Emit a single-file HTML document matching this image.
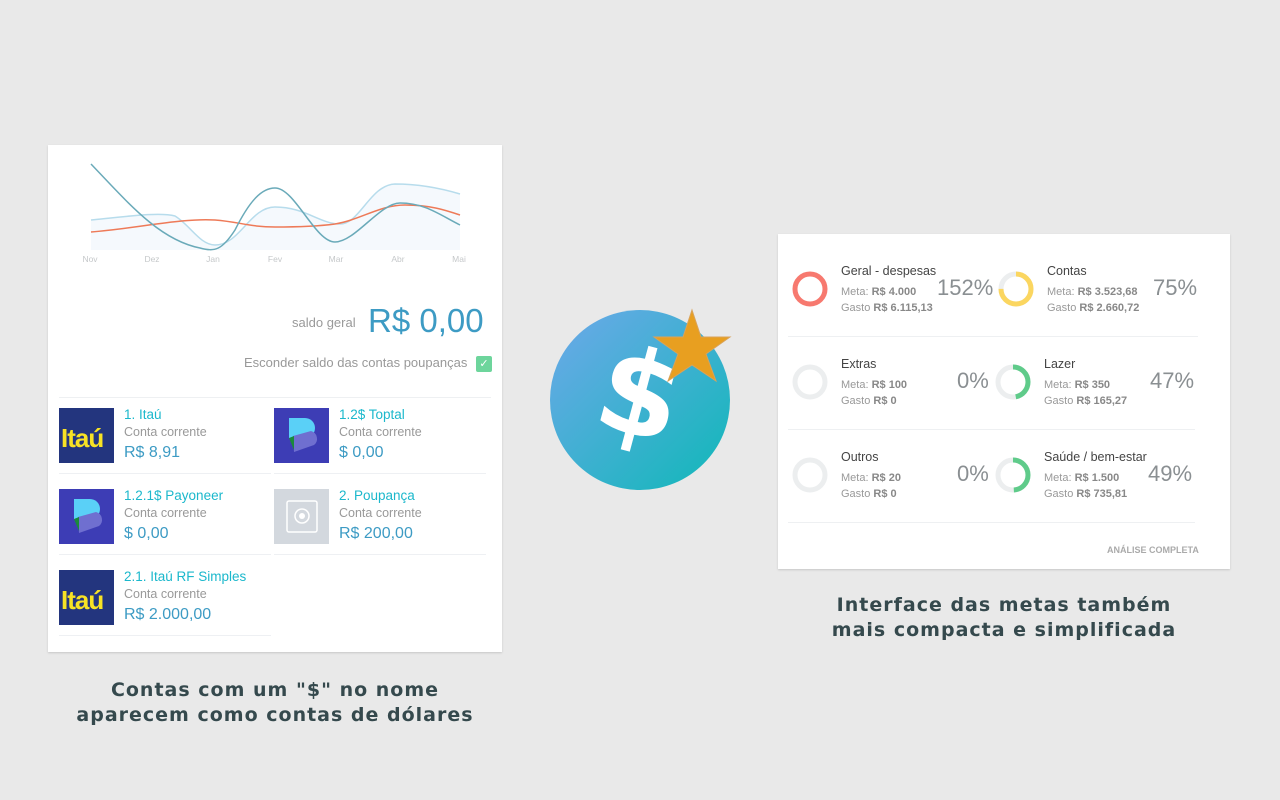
<!DOCTYPE html>
<html><head><meta charset="utf-8"><style>
*{margin:0;padding:0;box-sizing:border-box}
body{width:1280px;height:800px;background:#e9e9e9;position:relative;overflow:hidden;font-family:"Liberation Sans",sans-serif}
.card{position:absolute;background:#fff;box-shadow:0 1px 2px rgba(0,0,0,.15)}
.abs{position:absolute;white-space:nowrap}
.cap{position:absolute;font-family:"DejaVu Sans",sans-serif;font-weight:bold;font-size:19px;letter-spacing:1px;color:#35494d;text-align:center;line-height:25px}
.acc .logo{position:absolute;width:55px;height:55px}
.acc .n{position:absolute;left:65px;top:-1px;font-size:13.5px;color:#1bb8cc}
.acc .t{position:absolute;left:65px;top:17px;font-size:12.5px;color:#999}
.acc .v{position:absolute;left:65px;top:36px;font-size:16px;color:#3d9bc4}
.acc .ln{position:absolute;left:0;top:65px;width:212px;height:1px;background:#eef0f3}
.itau{background:#23357e;color:#f7e225;font-weight:bold;font-size:26px;line-height:60px;text-align:left;padding-left:2px;letter-spacing:-1px}
.g .nm{position:absolute;font-size:12.5px;color:#444}
.g .m{position:absolute;font-size:11px;color:#999;line-height:16px}
.g .m b{color:#888}
.g .p{position:absolute;font-size:22px;color:#8a8f92}
.hl{position:absolute;height:1px;background:#eef0f2}
</style></head><body>

<div class="card" style="left:48px;top:145px;width:454px;height:507px"></div>
<svg class="abs" style="left:0;top:0" width="520" height="280">
<path d="M91,220 C130,216 160,212 175,216 C190,225 200,245 215,245 C240,245 250,207 275,207 C305,207 320,224 340,224 C360,224 370,185 395,184 C420,184 440,188 460,194 L460,250 L91,250Z" fill="#f5f9fd"/>
<path d="M91,220 C130,216 160,212 175,216 C190,225 200,245 215,245 C240,245 250,207 275,207 C305,207 320,224 340,224 C360,224 370,185 395,184 C420,184 440,188 460,194" fill="none" stroke="#b7dcec" stroke-width="1.5"/>
<path d="M91,232 C140,228 180,218 215,220 C240,222 250,227 275,227 C300,227 320,226 335,224 C360,220 380,205 405,205 C430,205 445,210 460,215" fill="none" stroke="#ee7a58" stroke-width="1.5"/>
<path d="M91,164 C130,205 160,240 200,248 C215,252 222,250 235,230 C250,200 262,188 275,188 C295,188 315,242 335,242 C355,242 380,203 400,203 C425,203 440,215 460,225" fill="none" stroke="#6aaab9" stroke-width="1.5"/>
<g font-family="Liberation Sans" font-size="8.5" fill="#c5c8ca" text-anchor="middle">
<text x="90" y="262">Nov</text><text x="152" y="262">Dez</text><text x="213" y="262">Jan</text><text x="275" y="262">Fev</text><text x="336" y="262">Mar</text><text x="398" y="262">Abr</text><text x="459" y="262">Mai</text></g>
</svg>
<div class="abs" style="left:292px;top:315px;font-size:13px;color:#999">saldo geral</div>
<div class="abs" style="left:368px;top:302px;font-size:33px;color:#3d9bc4">R$ 0,00</div>
<div class="abs" style="left:244px;top:355px;font-size:13px;color:#999">Esconder saldo das contas poupanças</div>
<div class="abs" style="left:476px;top:356px;width:16px;height:16px;background:#6dd59c;border-radius:2px;color:#fff;font-size:11px;text-align:center;line-height:16px">✓</div>
<div class="hl" style="left:59px;top:397px;width:432px"></div>

<div class="abs acc" style="left:59px;top:408px"><div class="logo itau">Itaú</div><div class="n">1. Itaú</div><div class="t">Conta corrente</div><div class="v">R$ 8,91</div><div class="ln"></div></div>
<div class="abs acc" style="left:274px;top:408px"><div class="logo" style="background:#3d3db5"><svg width="55" height="55"><path d="M15,10 h16 a10,10 0 0 1 0,20 h-16z" fill="#5ad0f7"/><path d="M19,28 l18,-5 a8,8 0 0 1 3,14 l-20,7z" fill="#6f6fd0"/><path d="M15,30 l5,-2 v14z" fill="#1a8a3c"/></svg></div><div class="n">1.2$ Toptal</div><div class="t">Conta corrente</div><div class="v">$ 0,00</div><div class="ln"></div></div>
<div class="abs acc" style="left:59px;top:489px"><div class="logo" style="background:#3d3db5"><svg width="55" height="55"><path d="M15,10 h16 a10,10 0 0 1 0,20 h-16z" fill="#5ad0f7"/><path d="M19,28 l18,-5 a8,8 0 0 1 3,14 l-20,7z" fill="#6f6fd0"/><path d="M15,30 l5,-2 v14z" fill="#1a8a3c"/></svg></div><div class="n">1.2.1$ Payoneer</div><div class="t">Conta corrente</div><div class="v">$ 0,00</div><div class="ln"></div></div>
<div class="abs acc" style="left:274px;top:489px"><div class="logo" style="background:#d3d8de"><svg width="55" height="55"><rect x="13" y="12" width="30" height="31" rx="2" fill="none" stroke="#fff" stroke-width="1.5"/><circle cx="28" cy="27" r="7" fill="none" stroke="#fff" stroke-width="1.5"/><circle cx="28" cy="27" r="3" fill="#fff"/></svg></div><div class="n">2. Poupança</div><div class="t">Conta corrente</div><div class="v">R$ 200,00</div><div class="ln"></div></div>
<div class="abs acc" style="left:59px;top:570px"><div class="logo itau">Itaú</div><div class="n">2.1. Itaú RF Simples</div><div class="t">Conta corrente</div><div class="v">R$ 2.000,00</div><div class="ln"></div></div>

<div class="cap" style="left:48px;top:678px;width:454px">Contas com um "$" no nome<br>aparecem como contas de dólares</div>

<svg class="abs" style="left:540px;top:300px" width="200" height="200">
<defs><linearGradient id="lg" x1="0" y1="0" x2="1" y2="1"><stop offset="0" stop-color="#6ea8ea"/><stop offset="1" stop-color="#0fb8b8"/></linearGradient></defs>
<circle cx="100" cy="100" r="90" fill="url(#lg)"/>
<text x="100" y="135" text-anchor="middle" font-family="DejaVu Sans" font-weight="bold" font-size="118" fill="#fff" transform="rotate(15 100 95)">$</text>
<path d="M152,10 L161,37 L190,37 L166,54 L176,81 L152,65 L128,81 L138,54 L114,37 L143,37Z" fill="#e89f20" stroke="#d9a35a" stroke-width="1"/>
</svg>

<div class="card" style="left:778px;top:234px;width:452px;height:335px"></div>
<svg class="abs" style="left:778px;top:234px" width="452" height="300" fill="none" stroke-width="5">
<circle cx="32" cy="55" r="15" stroke="#f7796f"/>
<circle cx="238" cy="55" r="15" stroke="#eceeef"/><circle cx="238" cy="55" r="15" stroke="#fbd660" stroke-dasharray="70.7 94.2" transform="rotate(-90 238 55)"/>
<circle cx="32" cy="148" r="15" stroke="#eceeef"/>
<circle cx="235" cy="148" r="15" stroke="#eceeef"/><circle cx="235" cy="148" r="15" stroke="#5fcb8a" stroke-dasharray="44.3 94.2" transform="rotate(-90 235 148)"/>
<circle cx="32" cy="241" r="15" stroke="#eceeef"/>
<circle cx="235" cy="241" r="15" stroke="#eceeef"/><circle cx="235" cy="241" r="15" stroke="#5fcb8a" stroke-dasharray="46.2 94.2" transform="rotate(-90 235 241)"/>
</svg>
<div class="g">
<div class="nm abs" style="left:841px;top:264px">Geral - despesas</div><div class="m abs" style="left:841px;top:284px">Meta: <b>R$ 4.000</b><br>Gasto <b>R$ 6.115,13</b></div><div class="p abs" style="left:937px;top:275px">152%</div>
<div class="nm abs" style="left:1047px;top:264px">Contas</div><div class="m abs" style="left:1047px;top:284px">Meta: <b>R$ 3.523,68</b><br>Gasto <b>R$ 2.660,72</b></div><div class="p abs" style="left:1153px;top:275px">75%</div>
<div class="nm abs" style="left:841px;top:357px">Extras</div><div class="m abs" style="left:841px;top:377px">Meta: <b>R$ 100</b><br>Gasto <b>R$ 0</b></div><div class="p abs" style="left:957px;top:368px">0%</div>
<div class="nm abs" style="left:1044px;top:357px">Lazer</div><div class="m abs" style="left:1044px;top:377px">Meta: <b>R$ 350</b><br>Gasto <b>R$ 165,27</b></div><div class="p abs" style="left:1150px;top:368px">47%</div>
<div class="nm abs" style="left:841px;top:450px">Outros</div><div class="m abs" style="left:841px;top:470px">Meta: <b>R$ 20</b><br>Gasto <b>R$ 0</b></div><div class="p abs" style="left:957px;top:461px">0%</div>
<div class="nm abs" style="left:1044px;top:450px">Saúde / bem-estar</div><div class="m abs" style="left:1044px;top:470px">Meta: <b>R$ 1.500</b><br>Gasto <b>R$ 735,81</b></div><div class="p abs" style="left:1148px;top:461px">49%</div>
</div>
<div class="hl" style="left:788px;top:336px;width:410px"></div>
<div class="hl" style="left:788px;top:429px;width:407px"></div>
<div class="hl" style="left:788px;top:522px;width:407px"></div>
<div class="abs" style="left:1107px;top:545px;font-size:9px;font-weight:bold;color:#aaa">ANÁLISE COMPLETA</div>

<div class="cap" style="left:778px;top:593px;width:452px">Interface das metas também<br>mais compacta e simplificada</div>
</body></html>
